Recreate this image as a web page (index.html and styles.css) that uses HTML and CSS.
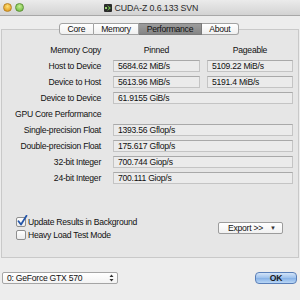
FILE: index.html
```html
<!DOCTYPE html>
<html>
<head>
<meta charset="utf-8">
<link rel="stylesheet" href="styles.css">
</head>
<body>
<div class="window">
  <div class="titlebar">
    <div class="lights">
      <span class="light yellow"></span>
      <span class="light green"></span>
    </div>
    <div class="title">
      <svg class="logo" width="8" height="8" viewBox="0 0 8 8"><rect x="0" y="0" width="8" height="8" rx="1" fill="#2b2b2b"/><path d="M3 1 L7 4 L3 7 L5 4 Z" fill="#6cc04a"/><rect x="1" y="3" width="2" height="2" fill="#9bd46f"/></svg>
      <span>CUDA-Z 0.6.133 SVN</span>
    </div>
  </div>
  <div class="main">
    <div class="tabs">
      <div class="tab first">Core</div>
      <div class="tab">Memory</div>
      <div class="tab selected">Performance</div>
      <div class="tab last">About</div>
    </div>
    <div class="panel">
      <div class="grid">
        <div class="label">Memory Copy</div>
        <div class="head">Pinned</div>
        <div class="head">Pageable</div>

        <div class="label">Host to Device</div>
        <div class="field">5684.62 MiB/s</div>
        <div class="field">5109.22 MiB/s</div>

        <div class="label">Device to Host</div>
        <div class="field">5613.96 MiB/s</div>
        <div class="field">5191.4 MiB/s</div>

        <div class="label">Device to Device</div>
        <div class="field wide">61.9155 GiB/s</div>

        <div class="label section">GPU Core Performance</div>
        <div class="empty"></div>

        <div class="label">Single-precision Float</div>
        <div class="field wide">1393.56 Gflop/s</div>

        <div class="label">Double-precision Float</div>
        <div class="field wide">175.617 Gflop/s</div>

        <div class="label">32-bit Integer</div>
        <div class="field wide">700.744 Giop/s</div>

        <div class="label">24-bit Integer</div>
        <div class="field wide">700.111 Giop/s</div>
      </div>
      <div class="options">
        <div class="checks">
          <div class="check-row">
            <span class="checkbox">
              <svg class="tick" width="12" height="12" viewBox="0 0 12 12"><path d="M2.5 6.2 L5 9.5 L10.5 0.8" fill="none" stroke="#2556a8" stroke-width="1.8" stroke-linecap="round" stroke-linejoin="round"/></svg>
            </span>
            <span>Update Results in Background</span>
          </div>
          <div class="check-row">
            <span class="checkbox"></span>
            <span>Heavy Load Test Mode</span>
          </div>
        </div>
        <div class="export">Export &gt;&gt; <span class="arrow">▼</span></div>
      </div>
    </div>
    <div class="bottom">
      <div class="select">
        <span>0: GeForce GTX 570</span>
        <svg width="5" height="8" viewBox="0 0 5 8"><path d="M0.5 3 L2.5 0.5 L4.5 3 Z M0.5 5 L2.5 7.5 L4.5 5 Z" fill="#333"/></svg>
      </div>
      <div class="ok">OK</div>
    </div>
  </div>
</div>
</body>
</html>
```
FILE: styles.css
```css
html, body {
  margin: 0;
  padding: 0;
}
body {
  font-family: "Liberation Sans", Arial, sans-serif;
  font-size: 8.6px;
  letter-spacing: -0.25px;
  color: #111;
}
.window {
  width: 300px;
  height: 300px;
  background: #ededed;
  overflow: hidden;
}
.titlebar {
  height: 15px;
  border-bottom: 1px solid #a8a8a8;
  background: linear-gradient(#ebebeb, #d3d3d3);
  display: flex;
  align-items: center;
  position: relative;
}
.lights {
  display: flex;
  gap: 3px;
  margin-left: 3px;
  width: 40px;
}
.light {
  width: 9px;
  height: 9px;
  border-radius: 50%;
  box-sizing: border-box;
}
.yellow {
  background: radial-gradient(circle at 50% 35%, #fde27a, #e6a52b 70%, #c98a1c);
  border: 1px solid #b88326;
}
.green {
  background: radial-gradient(circle at 50% 35%, #c6ee93, #7fc450 70%, #5c9a33);
  border: 1px solid #5f9338;
}
.title {
  flex: 1;
  display: flex;
  align-items: center;
  justify-content: center;
  gap: 3px;
  margin-left: -41px;
  font-size: 8.8px;
  letter-spacing: -0.1px;
  color: #2a2a2a;
}
.logo {
  display: block;
}
.main {
  padding: 7px 1px 0 1px;
}
.tabs {
  display: flex;
  justify-content: center;
  height: 12px;
  position: relative;
  z-index: 1;
  margin-left: -2px;
}
.tab {
  box-sizing: border-box;
  height: 12px;
  padding: 0 7.5px;
  line-height: 10px;
  border: 1px solid #a2a2a2;
  border-left: none;
  background: linear-gradient(#ffffff, #f0f0f0);
  color: #111;
}
.tab.first {
  border-left: 1px solid #a2a2a2;
  border-radius: 3px 0 0 3px;
}
.tab.last {
  border-radius: 0 3px 3px 0;
}
.tab.selected {
  background: linear-gradient(#9c9c9c, #858585);
  border-color: #7a7a7a;
  color: #111;
}
.panel {
  margin-top: -6px;
  height: 229px;
  box-sizing: border-box;
  border: 1px solid #c9c9c9;
  background: #e6e6e6;
  padding-top: 14px;
}
.grid {
  display: grid;
  grid-template-columns: 104px 87px 86px;
  column-gap: 7px;
  grid-auto-rows: 12px;
  row-gap: 4px;
}
.label {
  text-align: right;
  padding-right: 5px;
  line-height: 12px;
  white-space: nowrap;
}
.label.section {
  text-align: left;
  padding-left: 13px;
  grid-column: 1 / 2;
}
.empty {
  grid-column: 2 / 4;
}
.head {
  text-align: center;
  line-height: 12px;
}
.field {
  box-sizing: border-box;
  height: 12px;
  line-height: 10px;
  padding-left: 4px;
  background: #ebebeb;
  border: 1px solid #c4c4c4;
  border-top-color: #a9a9a9;
  white-space: nowrap;
}
.field.wide {
  grid-column: 2 / 4;
}
.options {
  display: flex;
  align-items: center;
  justify-content: space-between;
  margin-top: 31px;
  padding-left: 14px;
  padding-right: 15px;
}
.check-row {
  display: flex;
  align-items: center;
  gap: 2px;
  height: 13px;
}
.checkbox {
  position: relative;
  width: 10px;
  height: 10px;
  box-sizing: border-box;
  border: 1px solid #8f8f8f;
  border-radius: 2px;
  background: linear-gradient(#ffffff, #ececec);
}
.tick {
  position: absolute;
  left: -1px;
  top: -3px;
}
.export {
  box-sizing: border-box;
  width: 65px;
  height: 12px;
  line-height: 10px;
  border: 1px solid #9c9c9c;
  border-radius: 2px;
  background: linear-gradient(#ffffff, #f1f1f1);
  padding-left: 9px;
  display: flex;
  gap: 7px;
  margin-top: -1px;
}
.arrow {
  font-size: 6px;
  color: #333;
}
.bottom {
  display: flex;
  justify-content: space-between;
  align-items: center;
  margin-top: 13px;
  padding: 0 1px;
}
.select {
  box-sizing: border-box;
  width: 116px;
  height: 12px;
  margin-top: 1px;
  border: 1px solid #a5a5a5;
  border-radius: 2px;
  background: linear-gradient(#ffffff, #f3f3f3);
  display: flex;
  align-items: center;
  justify-content: space-between;
  padding: 0 3px 0 4px;
}
.select svg {
  display: block;
}
.ok {
  box-sizing: border-box;
  width: 42px;
  height: 12px;
  margin-right: 1px;
  border: 1px solid #5a7fb8;
  border-radius: 4px;
  background: linear-gradient(#d3e4f8, #9cc0ec 50%, #86b1e6 51%, #b9d6f6);
  text-align: center;
  line-height: 10px;
  font-weight: bold;
  color: #1a1a1a;
}
```
